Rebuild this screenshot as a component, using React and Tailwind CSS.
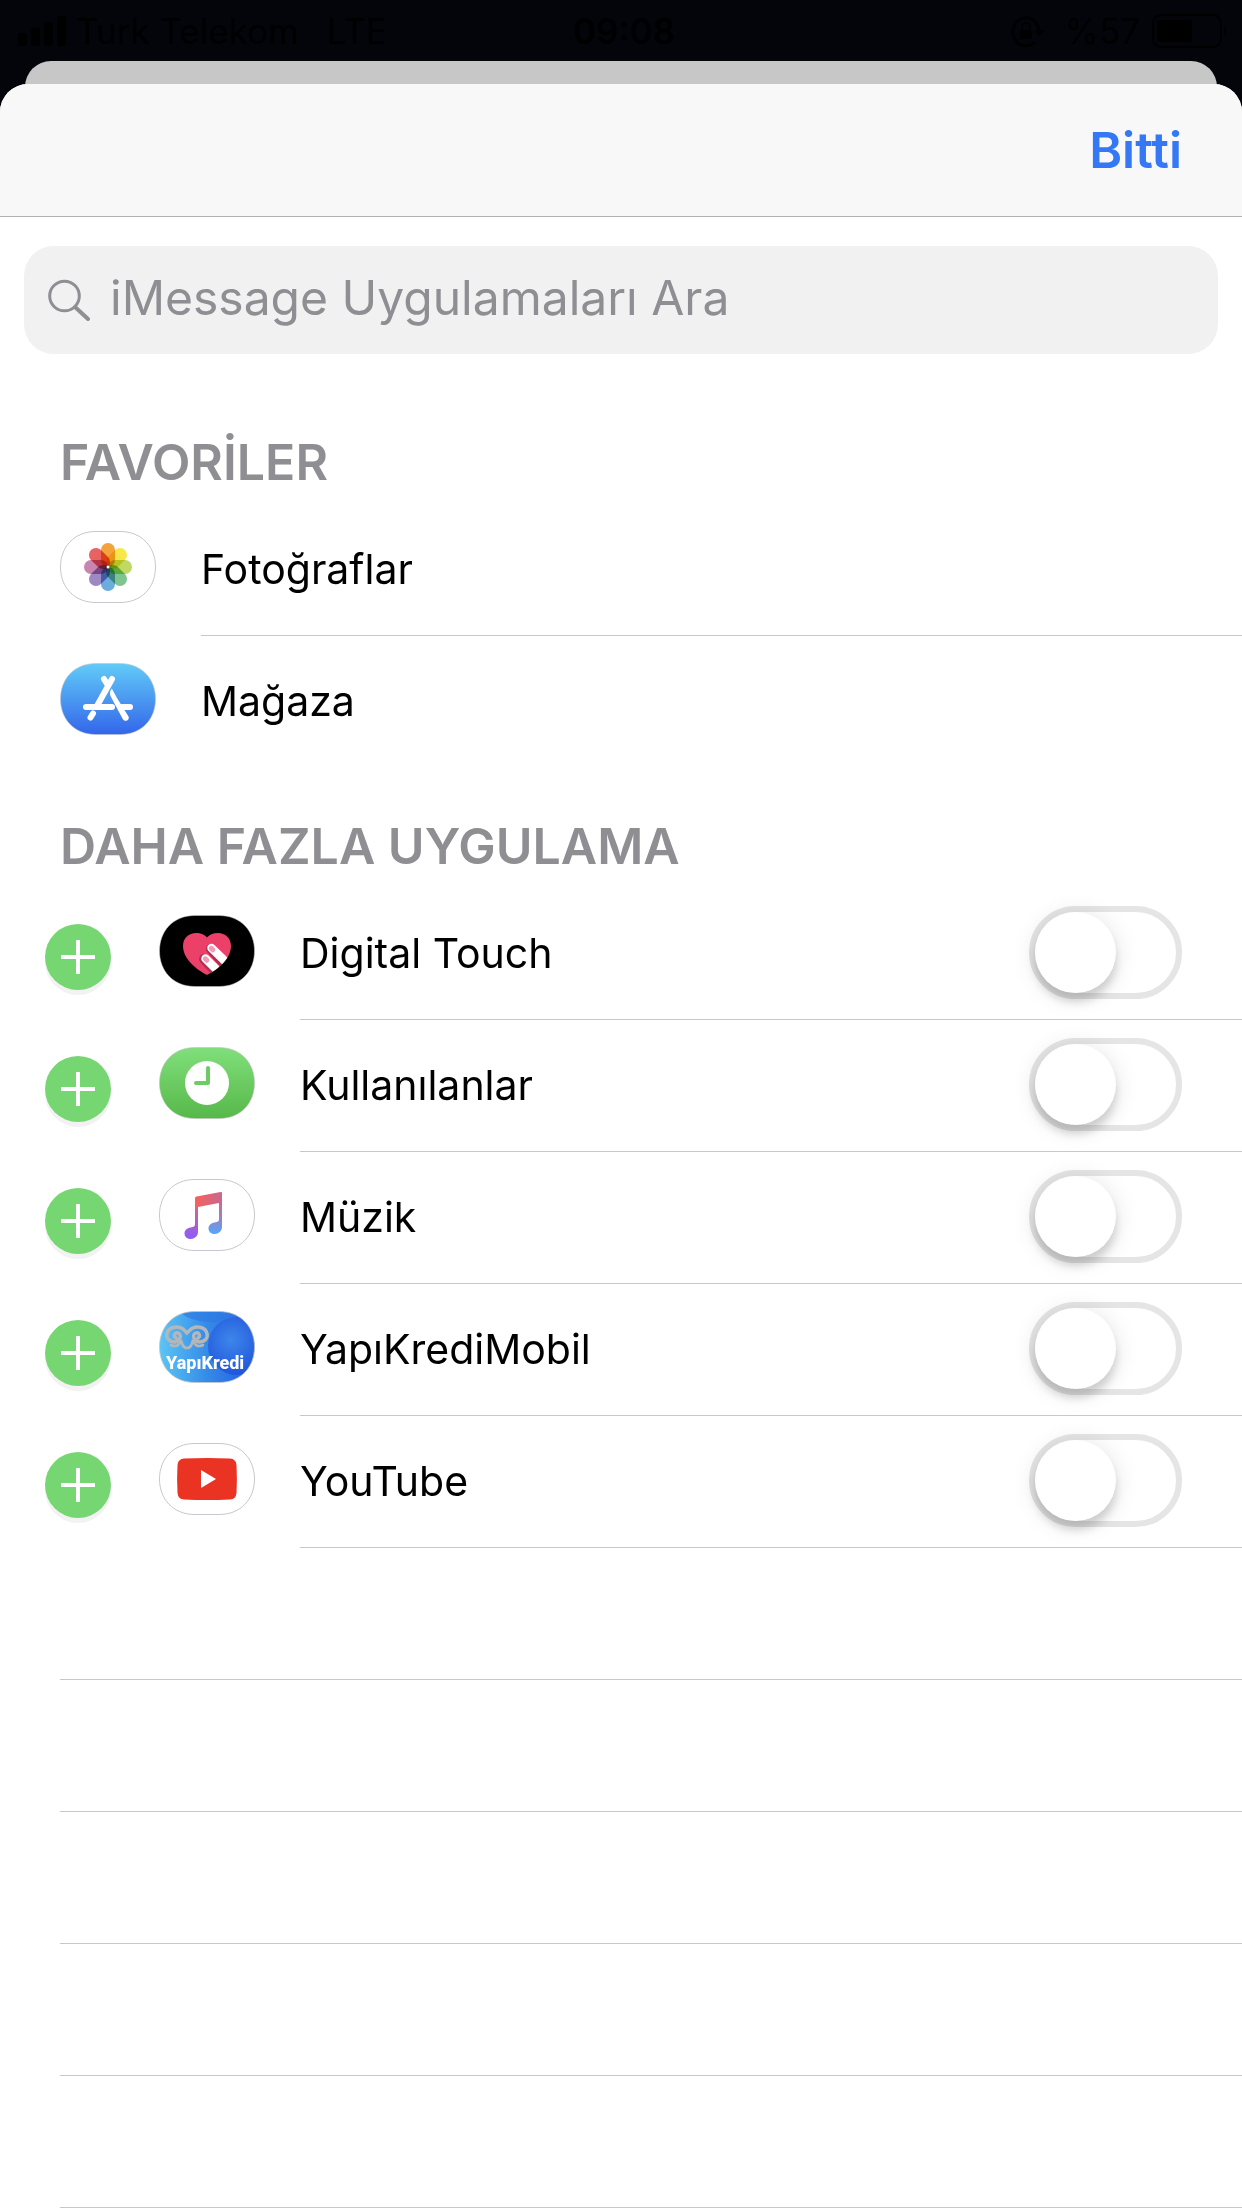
import { useState } from 'react';

const CAPSULE = 'M36 .5H60C82 .5 95.5 16 95.5 36S82 71.5 60 71.5H36C14 71.5 .5 56 .5 36S14 .5 36 .5Z';

const PETALS = ['#f2a33c', '#f6e74b', '#bfd962', '#7fc48f', '#6cacde', '#9c88c2', '#c785b0', '#e76260'];

const PhotosIcon = () => (
    <svg viewBox="0 0 96 72" className="h-[72px] w-24" aria-hidden="true">
        <path d={CAPSULE} fill="#fff" stroke="#c8c7cc" />
        <g className="isolate">
            {PETALS.map((color, i) => (
                <rect
                    key={color}
                    x="41"
                    y="12"
                    width="14"
                    height="24"
                    rx="7"
                    fill={color}
                    transform={`rotate(${i * 45} 48 36)`}
                    className="mix-blend-multiply"
                />
            ))}
        </g>
        <circle cx="48" cy="36" r="1.5" fill="#fff" />
    </svg>
);

const StoreIcon = () => (
    <svg viewBox="0 0 96 72" className="h-[72px] w-24" aria-hidden="true">
        <defs>
            <linearGradient id="store" x1="0" y1="0" x2="0" y2="1">
                <stop offset="0" stopColor="#62cbf8" />
                <stop offset="1" stopColor="#3366ea" />
            </linearGradient>
        </defs>
        <path d={CAPSULE} fill="url(#store)" stroke="#c0c4cc" strokeWidth=".6" />
        <g fill="none" stroke="#fff" strokeWidth="6" strokeLinecap="round">
            <path d="M44 16L48 22.500M52 16L37.500 42" />
            <path d="M26 44H52M62 44H70M33 50.500L30.500 54.500" />
        </g>
        <path d="M51.800 25.500C49.500 28.500 49.500 31 51 34L63 56.500C65.500 59.500 70 57 68.500 53.500L57 35Z" fill="#fff" />
    </svg>
);

const TouchIcon = () => (
    <svg viewBox="0 0 96 72" className="h-[72px] w-24" aria-hidden="true">
        <defs>
            <clipPath id="heart">
                <path d="M48 60C42 57 24 46 24 31C24 23 30 18 37 18C42 18 46 20 48 22.500C50 20 54 18 59 18C66 18 72 23 72 31C72 46 54 57 48 60Z" />
            </clipPath>
        </defs>
        <path d={CAPSULE} fill="#000" stroke="#c8c7cc" strokeWidth=".5" />
        <g clipPath="url(#heart)" strokeLinecap="round">
            <path d="M20 14H76V62H20Z" fill="#eb4169" />
            <path d="M52 34L72 56M45 44L62 62" stroke="#b52c50" strokeWidth="10" />
            <path d="M52.500 33L74 54M46.500 43.500L66 63" stroke="#fff" strokeWidth="8.500" />
            <path d="M52.300 33.300L53.800 34.800M46.300 43.800L47.800 45.300" stroke="#f19cb4" strokeWidth="5" />
        </g>
    </svg>
);

const RecentsIcon = () => (
    <svg viewBox="0 0 96 72" className="h-[72px] w-24" aria-hidden="true">
        <defs>
            <linearGradient id="recents" x1="0" y1="0" x2="0" y2="1">
                <stop offset="0" stopColor="#80df7b" />
                <stop offset="1" stopColor="#57b84a" />
            </linearGradient>
        </defs>
        <path d={CAPSULE} fill="url(#recents)" stroke="#c0c4c0" strokeWidth=".6" />
        <circle cx="48" cy="36" r="22" fill="#fff" />
        <path d="M49 21V36H37" fill="none" stroke="#6ccb62" strokeWidth="4" strokeLinecap="round" strokeLinejoin="round" />
    </svg>
);

const MusicIcon = () => (
    <svg viewBox="0 0 96 72" className="h-[72px] w-24" aria-hidden="true">
        <defs>
            <linearGradient id="music-warm" gradientUnits="userSpaceOnUse" x1="36" y1="16" x2="34" y2="60">
                <stop offset="0" stopColor="#f9615c" />
                <stop offset=".5" stopColor="#b964ad" />
                <stop offset="1" stopColor="#8a5bff" />
            </linearGradient>
            <linearGradient id="music-cool" gradientUnits="userSpaceOnUse" x1="60" y1="14" x2="56" y2="54">
                <stop offset="0" stopColor="#e0607a" />
                <stop offset=".5" stopColor="#a97ab8" />
                <stop offset="1" stopColor="#57a4f7" />
            </linearGradient>
            <linearGradient id="music-beam" gradientUnits="userSpaceOnUse" x1="38" y1="20" x2="62" y2="24">
                <stop offset="0" stopColor="#f2625f" />
                <stop offset="1" stopColor="#c9688f" />
            </linearGradient>
        </defs>
        <path d={CAPSULE} fill="#fff" stroke="#c8c7cc" />
        <path d="M36 20H39V53C39 57 35.500 60 31.500 60C28 60 25.500 57.500 25.500 54.500C25.500 51 28 49 31.500 48.500C35 48 36 47.500 36 44.500Z" fill="url(#music-warm)" />
        <path d="M60 15H63V48C63 52 59.500 55 55.500 55C52 55 49.500 52.500 49.500 49.500C49.500 46 52 44 55.500 43.500C59 43 60 42.500 60 39.500Z" fill="url(#music-cool)" />
        <path d="M36 19.500C36 18.500 36.500 17.800 37.500 17.500L61.500 13C62.500 12.800 63 13.300 63 14.200V24H60L39 28H36Z" fill="url(#music-beam)" />
    </svg>
);

const YapiKrediIcon = () => (
    <svg viewBox="0 0 96 72" className="h-[72px] w-24" aria-hidden="true">
        <defs>
            <linearGradient id="yk" x1="0" y1="0" x2="1" y2="0">
                <stop offset="0" stopColor="#5cc6f5" />
                <stop offset=".5" stopColor="#358be8" />
                <stop offset="1" stopColor="#2357dd" />
            </linearGradient>
            <radialGradient id="yk-orb" cx=".4" cy=".4" r=".6">
                <stop offset="0" stopColor="#3d86ea" />
                <stop offset="1" stopColor="#2055dc" />
            </radialGradient>
            <clipPath id="yk-clip">
                <path d={CAPSULE} />
            </clipPath>
        </defs>
        <g clipPath="url(#yk-clip)">
            <path d="M0 0H96V72H0Z" fill="url(#yk)" />
            <ellipse cx="52" cy="-6" rx="34" ry="17" fill="#2d7ae4" opacity=".7" />
            <circle cx="78" cy="35" r="29" fill="url(#yk-orb)" />
        </g>
        <text x="7" y="58" fill="#fff" fontSize="18" fontWeight="800" fontFamily="Roboto, 'Liberation Sans', sans-serif">
            YapıKredi
        </text>
        <g fill="none" stroke="#b4b7ba" strokeWidth="3.4" strokeLinecap="round">
            <path d="M17 27C14 25 16 21 19 22C23 23 22 30 16 31C10 31 7 27 8 23C9 16 20 13 26 20L28 22L30 20C36 13 47 16 48 23C49 27 46 31 40 31C34 30 33 23 37 22C40 21 42 25 39 27" />
            <path d="M12 34C18 37 21 33 22 29C23 33 24 37 28 37S33 33 34 29C35 33 38 37 44 34" strokeWidth="2.6" />
        </g>
        <path d={CAPSULE} fill="none" stroke="#c8c7cc" strokeWidth=".8" />
    </svg>
);

const YouTubeIcon = () => (
    <svg viewBox="0 0 96 72" className="h-[72px] w-24" aria-hidden="true">
        <path d={CAPSULE} fill="#fff" stroke="#c8c7cc" />
        <path d="M25 15.500Q48 14.500 71 15.500Q77 16 77.500 22Q78.300 36 77.500 50Q77 56 71 56.500Q48 57.500 25 56.500Q19 56 18.500 50Q17.700 36 18.500 22Q19 16 25 15.500Z" fill="#eb3323" />
        <path d="M42 27L57 36L42 45Z" fill="#fff" />
    </svg>
);

const favorites = [
    { name: 'Fotoğraflar', Icon: PhotosIcon },
    { name: 'Mağaza', Icon: StoreIcon },
];

const moreApps = [
    { name: 'Digital Touch', Icon: TouchIcon },
    { name: 'Kullanılanlar', Icon: RecentsIcon },
    { name: 'Müzik', Icon: MusicIcon },
    { name: 'YapıKrediMobil', Icon: YapiKrediIcon },
    { name: 'YouTube', Icon: YouTubeIcon },
];

const StatusBar = () => (
    <div className="grid h-[61px] grid-cols-3 items-start pt-2 pr-3 pl-[18px] text-[35px] leading-[46px] text-black">
        <div className="flex items-center">
            <svg viewBox="0 0 48 30" className="mr-2.5 h-[30px] w-12" aria-hidden="true">
                <rect x="0" y="17" width="9" height="13" rx="3" />
                <rect x="13" y="12" width="9" height="18" rx="3" />
                <rect x="26" y="6" width="9" height="24" rx="3" />
                <rect x="39" y="0" width="9" height="30" rx="3" />
            </svg>
            <span className="whitespace-nowrap">Turk Telekom</span>
            <span className="ml-7">LTE</span>
        </div>
        <div className="text-center font-semibold">09:08</div>
        <div className="flex items-center justify-end">
            <svg viewBox="0 0 34 32" className="mr-5 h-8 w-[34px]" aria-hidden="true">
                <path d="M28 17A13 14 0 1 0 24 27" fill="none" stroke="#000" strokeWidth="3" />
                <path d="M23 15H34L28.500 21Z" />
                <path d="M9 15H21V24H9Z" />
                <path d="M11 16V12A4 4 0 0 1 19 12V16" fill="none" stroke="#000" strokeWidth="2" />
            </svg>
            <span>%57</span>
            <svg viewBox="0 0 78 34" className="ml-3 h-[34px] w-[78px]" aria-hidden="true">
                <rect x="1" y="1" width="68" height="32" rx="8" fill="none" stroke="#000" strokeWidth="2" />
                <rect x="5" y="6" width="35" height="22" rx="3" />
                <path d="M72 12Q77 17 72 22Z" />
            </svg>
        </div>
    </div>
);

const SectionTitle = ({ children }) => (
    <h2 className="px-[60px] pt-6 text-[50px] leading-[60px] font-semibold text-[#8e8e93]">{children}</h2>
);

const FavoriteRow = ({ name, Icon, last }) => (
    <li className="flex h-[132px] items-center pl-[60px]">
        <div className="pb-1.5">
            <Icon />
        </div>
        <div
            className={`ml-[45px] flex h-full flex-1 items-center border-b pb-0.5 text-[41px] leading-[50px] text-black ${last ? 'border-transparent' : 'border-[#c8c7cc]'}`}
        >
            {name}
        </div>
    </li>
);

const AppRow = ({ name, Icon, enabled, onToggle }) => {
    const id = `switch-${name.replace(' ', '-')}`;

    return (
        <li className="flex h-[132px] items-center pl-[45px]">
            <button
                type="button"
                aria-label={`${name} ekle`}
                className="mt-1.5 flex size-[66px] items-center justify-center rounded-full bg-[#76d672] shadow-[0_5px_0_#f2f2f2]"
            >
                <svg viewBox="0 0 34 34" className="size-[34px]" aria-hidden="true">
                    <path d="M17 0V34M0 17H34" stroke="#fff" strokeWidth="4" />
                </svg>
            </button>
            <div className="ml-12 pb-1.5">
                <Icon />
            </div>
            <div className="ml-[45px] flex h-full flex-1 items-center justify-between border-b border-[#c8c7cc] pr-[60px] pb-0.5">
                <label htmlFor={id} className="text-[41px] leading-[50px] text-black">
                    {name}
                </label>
                <input
                    id={id}
                    type="checkbox"
                    role="switch"
                    checked={enabled}
                    onChange={onToggle}
                    className="h-[93px] w-[153px] cursor-pointer appearance-none rounded-full border-6 border-[#e5e5e5] before:block before:size-[81px] before:rounded-full before:bg-white before:shadow-[0_9px_9px_rgba(0,0,0,0.14),0_3px_24px_rgba(0,0,0,0.12)] checked:border-[#76d672] checked:bg-[#76d672] checked:before:translate-x-[60px]"
                />
            </div>
        </li>
    );
};

const App = () => {
    const [query, setQuery] = useState('');
    const [enabled, setEnabled] = useState({});

    const handleToggle = (name) => {
        setEnabled({ ...enabled, [name]: !enabled[name] });
    };

    return (
        <div className="flex min-h-screen flex-col bg-[#03050a] font-[Inter,'Liberation_Sans',sans-serif]">
            <StatusBar />

            {/* Card behind the sheet */}
            <div className="mx-[25px] h-16 rounded-t-[26px] bg-[#c7c7c7]" />

            <main className="-mt-[41px] flex-1 overflow-hidden rounded-t-[28px] bg-white">
                <header className="flex h-[133px] items-center justify-end border-b border-[#b2b2b2] bg-[#f8f8f8] px-[60px]">
                    <button type="button" className="text-[50px] leading-[60px] font-semibold text-[#3478f6]">
                        Bitti
                    </button>
                </header>

                <div className="px-6 pt-[29px]">
                    <label className="flex h-[108px] items-center rounded-[30px] bg-[#f1f1f2] px-6">
                        <svg viewBox="0 0 42 42" className="size-[42px]" aria-hidden="true">
                            <circle cx="16.500" cy="17" r="14.800" fill="none" stroke="#8e8e93" strokeWidth="3" />
                            <path d="M27 28L40 40" stroke="#8e8e93" strokeWidth="4" strokeLinecap="round" />
                        </svg>
                        <input
                            type="search"
                            value={query}
                            onChange={(e) => setQuery(e.target.value)}
                            placeholder="iMessage Uygulamaları Ara"
                            aria-label="iMessage Uygulamaları Ara"
                            className="ml-5 flex-1 bg-transparent pb-1 text-[48px] leading-[60px] text-black outline-none placeholder:text-[#8e8e93]"
                        />
                    </label>
                </div>

                <section className="pt-[54px]">
                    <SectionTitle>FAVORİLER</SectionTitle>
                    <ul className="pt-3">
                        {favorites.map((app, i) => (
                            <FavoriteRow key={app.name} {...app} last={i === favorites.length - 1} />
                        ))}
                    </ul>
                </section>

                <section className="pt-6">
                    <SectionTitle>DAHA FAZLA UYGULAMA</SectionTitle>
                    <ul className="pt-3">
                        {moreApps.map((app) => (
                            <AppRow
                                key={app.name}
                                {...app}
                                enabled={!!enabled[app.name]}
                                onToggle={() => handleToggle(app.name)}
                            />
                        ))}
                    </ul>
                </section>

                {/* Empty rows */}
                <div className="pl-[60px]">
                    {[1, 2, 3, 4, 5].map((row) => (
                        <div key={row} className="h-[132px] border-b border-[#c8c7cc]" />
                    ))}
                </div>
            </main>
        </div>
    );
};

export default App;
